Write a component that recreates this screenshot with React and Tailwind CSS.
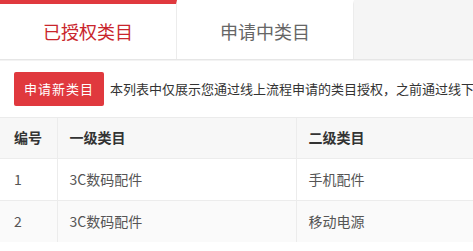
const FONT = "font-['Microsoft_YaHei','Noto_Sans_CJK_SC',sans-serif]";

const ROWS = [
  { id: 1, first: "3C数码配件", second: "手机配件" },
  { id: 2, first: "3C数码配件", second: "移动电源" },
];

function Tab({ active, children }) {
  return (
    <div
      className={`w-[177px] h-[59px] flex items-center justify-center bg-white border-r border-[#ececec] text-[18px] ${
        active ? "text-[#c9252c] border-t-4 border-t-[#e0393e]" : "text-[#666] border-t-4 border-t-white"
      }`}
    >
      <span>{children}</span>
    </div>
  );
}

export default function App() {
  return (
    <div className={`w-[473px] h-[251px] overflow-hidden bg-white ${FONT}`}>
      {/* Tabs */}
      <div className="flex bg-[#f5f5f5] border-b border-[#e6e6e6]">
        <Tab active>已授权类目</Tab>
        <Tab>申请中类目</Tab>
      </div>

      {/* Toolbar */}
      <div className="h-[58px] flex items-center pl-[14px] gap-[6px] border-t border-[#f3f3f3] border-b border-b-[#ebebeb] whitespace-nowrap">
        <button className="h-[34px] w-[90px] shrink-0 rounded-[2px] bg-[#e0393e] text-white text-[13px] tracking-[1px]">
          申请新类目
        </button>
        <span className="text-[13px] text-[#333]">
          本列表中仅展示您通过线上流程申请的类目授权，之前通过线下申请的类目请联系运营人员
        </span>
      </div>

      {/* Table */}
      <table className="w-[620px] border-collapse text-[14px] text-left">
        <thead>
          <tr className="h-[40px] bg-[#f7f7f7] text-[#333]">
            <th className="w-[57px] pl-[14px] font-bold border-r border-[#ececec]">编号</th>
            <th className="w-[239px] pl-[12px] font-bold border-r border-[#ececec]">一级类目</th>
            <th className="pl-[12px] font-bold">二级类目</th>
          </tr>
        </thead>
        <tbody>
          {ROWS.map((r, i) => (
            <tr
              key={r.id}
              className={`h-[42px] text-[#555] border-t border-[#ececec] ${i % 2 ? "bg-[#fafafa]" : "bg-white"}`}
            >
              <td className="pl-[14px] border-r border-[#ececec]">{r.id}</td>
              <td className="pl-[12px] border-r border-[#ececec]">{r.first}</td>
              <td className="pl-[12px]">{r.second}</td>
            </tr>
          ))}
        </tbody>
      </table>
    </div>
  );
}
